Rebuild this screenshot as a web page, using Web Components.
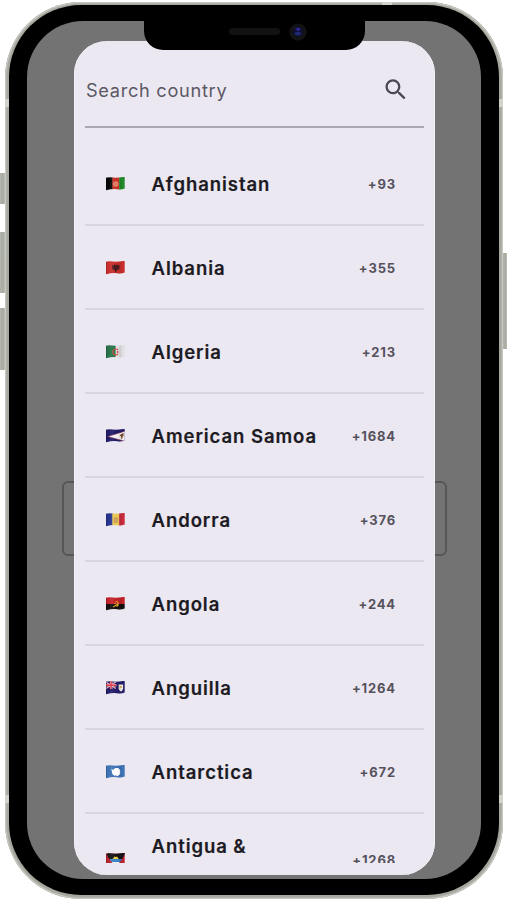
<!DOCTYPE html>
<html lang="en">
<head>
<meta charset="utf-8">
<title>Select country</title>
<style>
html,body{margin:0;background:#fff}
body{width:507px;height:900px;overflow:hidden;font-family:Inter,"Liberation Sans",sans-serif}
</style>
</head>
<body>
<phone-frame>
  <country-dialog>
    <search-field>Search country</search-field>
    <country-list>
      <country-row flag="af" code="+93">Afghanistan</country-row>
      <country-row flag="al" code="+355">Albania</country-row>
      <country-row flag="dz" code="+213">Algeria</country-row>
      <country-row flag="as" code="+1684">American Samoa</country-row>
      <country-row flag="ad" code="+376">Andorra</country-row>
      <country-row flag="ao" code="+244">Angola</country-row>
      <country-row flag="ai" code="+1264">Anguilla</country-row>
      <country-row flag="aq" code="+672">Antarctica</country-row>
      <country-row flag="ag" code="+1268" tall>Antigua &amp;</country-row>
    </country-list>
  </country-dialog>
</phone-frame>
<script>
const define = (name, html, setup) => customElements.define(name, class extends HTMLElement {
  constructor() {
    super();
    const t = document.createElement('template');
    t.innerHTML = html;
    this.attachShadow({mode: 'open'}).append(t.content.cloneNode(true));
  }
  connectedCallback() { if (setup) setup(this, this.shadowRoot); }
});

/* Handset: side keys, metal rim, black bezel, dimmed screen and notch. */
define('phone-frame', `
<style>
:host{display:block;position:relative;box-sizing:border-box;width:507px;height:900px;padding:1.5px 4.5px 1px 5px;overflow:hidden}
.key{position:absolute;background:linear-gradient(90deg,#b4b6ad,#a7aaa0 60%,#bcbeb6)}
.rim{position:relative;box-sizing:border-box;height:100%;padding:3.5px 4px 4px;border-radius:76px;background:#a5a79e;box-shadow:inset 0 0 0 1.3px #c6c9c1,inset 0 0 0 2.6px #a8aaa1}
.band{position:absolute;background:#d0d2cc}
.bezel{position:relative;box-sizing:border-box;height:100%;padding:16px 18px;border-radius:72px;background:#000}
.screen{box-sizing:border-box;height:100%;padding:20px 46px 4.5px 47px;border-radius:56px;background:#737373;position:relative;overflow:hidden}
.field{position:absolute;left:35px;top:460px;width:385px;height:75px;box-sizing:border-box;border:2px solid #565657;border-radius:6px}
.notch{position:absolute;left:135px;top:15px;width:221px;height:30px;background:#000;border-radius:0 0 19px 19px}
.speaker{position:absolute;left:85px;top:8px;width:51px;height:7px;border-radius:4px;background:#121212}
.lens{position:absolute;left:145px;top:2.5px}
</style>
<i class="key" style="left:0;top:173px;width:5px;height:31px"></i>
<i class="key" style="left:0;top:232px;width:5px;height:61px"></i>
<i class="key" style="left:0;top:308px;width:5px;height:62px"></i>
<i class="key" style="left:503px;top:253px;width:4px;height:96px"></i>
<div class="rim">
  <i class="band" style="left:0;top:97px;width:4px;height:8px"></i>
  <i class="band" style="right:0;top:97px;width:4px;height:8px"></i>
  <i class="band" style="left:0;top:793px;width:4px;height:8px"></i>
  <i class="band" style="right:0;top:793px;width:4px;height:8px"></i>
  <i class="band" style="right:111px;top:0;width:10px;height:3px"></i>
  <div class="bezel">
    <div class="screen"><div class="field"></div><slot></slot></div>
    <div class="notch">
      <div class="speaker"></div>
      <svg class="lens" width="18" height="18" viewBox="0 0 18 18"><circle cx="9" cy="9" r="8.600" fill="#131316"/><circle cx="9" cy="8.500" r="5" fill="#101030"/><path d="M6 5h5.500l-1 2.800-2 .4z" fill="#2d2891"/><ellipse cx="8.800" cy="10.600" rx="3.200" ry="1.800" fill="#1d2870"/></svg>
    </div>
  </div>
</div>`);

define('country-dialog', `
<style>
:host{position:relative;display:flex;flex-direction:column;box-sizing:border-box;height:100%;padding:20px 11px 11.5px;border-radius:33px;background:#ece8f2;box-shadow:inset .8px 0 #f4f1f8,inset -.8px 0 #f4f1f8;overflow:hidden}
</style><slot></slot>`);

define('search-field', `
<style>
:host{display:flex;align-items:center;justify-content:space-between;box-sizing:border-box;flex:none;height:67px;padding:0 17px 8px 1px;border-bottom:2px solid #aaa7b0;color:#5b5863;font-size:18.2px;letter-spacing:.7px}
svg{display:block;margin-bottom:1px}
</style><span><slot></slot></span>
<svg width="24" height="24" viewBox="0 0 24 24" fill="#4b4754"><path transform="translate(-1 -1.200) scale(1.150)" d="M15.500 14h-.79l-.28-.27A6.470 6.470 0 0 0 16 9.500 6.500 6.500 0 1 0 9.500 16c1.610 0 3.090-.59 4.230-1.570l.27.28v.79l5 4.990L20.490 19zm-6 0a4.500 4.500 0 1 1 0-9 4.500 4.500 0 0 1 0 9z"/></svg>`);

define('country-list', `
<style>:host{display:block;flex:1;min-height:0;overflow:hidden;padding-top:14px}</style><slot></slot>`);

define('country-row', `
<style>
:host{display:grid;grid-template-columns:46px 1fr auto;align-items:center;box-sizing:border-box;height:84px;padding:1px 27.500px 0 20.500px;border-bottom:2px solid #dad6e1}
:host([tall]){height:92px}
.name{color:#1c1a22;font-size:18.500px;font-weight:600;letter-spacing:.94px;white-space:nowrap;-webkit-text-stroke:.2px #1c1a22}
:host([tall]) .name{align-self:start;padding-top:20px}
.code{color:#55525c;font-size:13px;font-weight:700;letter-spacing:.85px}
</style>
<flag-icon></flag-icon><span class="name"><slot></slot></span><span class="code"></span>`,
(el, root) => {
  root.querySelector('.code').textContent = el.getAttribute('code');
  root.querySelector('flag-icon').setAttribute('name', el.getAttribute('flag'));
});

/* Waving flags, each drawn on a 20 by 14 field. */
const flags = {
  af: `<path d="M0 0h7v14H0z" fill="#080808"/><path d="M6.500 0h7v14h-7z" fill="#c93327"/><path d="M13.500 0H20v14h-6.500z" fill="#238a2b"/><circle cx="10" cy="7" r="2.300" fill="#df735c" stroke="#f0ae91" stroke-width=".7"/>`,
  al: `<path d="M0 0h20v14H0z" fill="#c92e2c"/><path d="M10 4.500 8.500 3 8 4.500 6 4l.5 2-1 1 1.500.5L6.500 9l2-.5L10 12l1.500-3.500 2 .5L13 7.500l1.500-.5-1-1 .5-2-2 .5L11.500 3z" fill="#481a1e"/>`,
  dz: `<path d="M0 0h10v14H0z" fill="#28734a"/><path d="M10 0h10v14H10z" fill="#e0e0e2"/><path d="M12.300 5a3 3 0 1 0 0 4" fill="none" stroke="#d44c41" stroke-width="1.200"/><path d="m12 5.300.5 1.200 1.200.5-1.200.5L12 8.700l-.5-1.200-1.200-.5 1.200-.5z" fill="#d44c41"/>`,
  as: `<path d="M0 0h20v14H0z" fill="#211d69"/><path d="M2 7.500 20 2v10.500z" fill="#f4eef2" stroke="#9d3548" stroke-width=".5"/><path d="m14 6.500 1.500-1.500 2.500-1v3l-1 1-.5 2.500-1-1v-2z" fill="#76502e"/>`,
  ad: `<path d="M0 0h7v14H0z" fill="#27348f"/><path d="M6.500 0h7v14h-7z" fill="#eac953"/><path d="M13.500 0H20v14h-6.500z" fill="#c92c3c"/><rect x="8.200" y="4.500" width="3.800" height="5" rx="1" fill="#d3a45f" stroke="#b99a4c" stroke-width=".6"/>`,
  ao: `<path d="M0 0h20v7H0z" fill="#c32229"/><path d="M0 7h20v7H0z" fill="#170f0d"/><path d="M10 4.300c3 .2 3.500 4 .8 5.200M7.500 10l4.500-3M8.500 6.500h1.500" fill="none" stroke="#d9a82c" stroke-width="1.100"/>`,
  ai: `<path d="M0 0h20v14H0z" fill="#241d69"/><path d="m0 1 10 6.500M10 1 0 7.500" stroke="#e3a8b4" stroke-width="1.400"/><path d="M5.300 0v8M0 4.300h10.600" stroke="#eeb9be" stroke-width="2.500"/><path d="M5.300 0v8M0 4.300h10.600" stroke="#d93949" stroke-width="1.500"/><path d="M13 3.500h4.500v4q-.5 2.500-2.300 3-2-.8-2.200-3z" fill="#f3eee7"/><path d="M14 5h2.500v2H14z" fill="#d9b874"/>`,
  aq: `<path d="M0 0h20v14H0z" fill="#3e73b6"/><path d="m5.500 3.800 1.800 1.200 2-2h3.200l2 2V9L12 11.300 9.500 10.300 9 11 6.500 9z" fill="#fff"/>`,
  ag: `<path d="M0 0h20v14H0z" fill="#bd2532"/><path d="M0 0h20l-3.500 6h-13z" fill="#151416"/><path d="M3.500 6h13L14.200 9H5.700z" fill="#3984c8"/><path d="M5.700 9h8.500L10 14z" fill="#eee"/><path d="m6.500 6 1.300-1L8.500 3.500 10 4l1.500-.5.7 1.500 1.300 1z" fill="#eec941"/>`
};
define('flag-icon', `
<style>:host{display:block;width:20px;height:14px}svg{display:block;clip-path:path('M.2 1.200Q3 .5 7 1T19.200 .3V12Q16 13.300 11.500 12.700T.5 13.700Z')}</style>
<svg width="19.500" height="14" viewBox="0 0 20 14" preserveAspectRatio="none"></svg>`,
(el, root) => {
  const draw = () => {
    const art = flags[el.getAttribute('name')];
    if (art) root.querySelector('svg').innerHTML = art +
      '<path d="M0 0h1v14H0z" fill="#000" opacity=".18"/><path d="M4 0h4v14H4z" fill="#fff" opacity=".06"/><path d="M13 0h3v14h-3z" fill="#000" opacity=".07"/>';
  };
  draw();
  new MutationObserver(draw).observe(el, {attributes: true});
});
</script>
</body>
</html>
